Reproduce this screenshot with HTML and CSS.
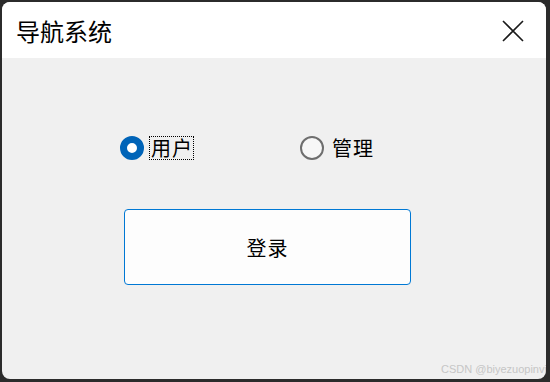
FILE: index.html
```html
<!DOCTYPE html>
<html lang="zh-CN">
<head>
    <meta charset="UTF-8">
    <meta name="viewport" content="width=device-width, initial-scale=1.0">
    <title>导航系统</title>
    <link rel="stylesheet" href="styles.css">
</head>
<body>
    <div class="window">
        <!-- Title Bar -->
        <div class="titlebar">
            <span class="title">导航系统</span>
            <button class="close" aria-label="关闭">
                <svg width="22" height="22" viewBox="0 0 22 22">
                    <path d="M1 1 L21 21 M21 1 L1 21" stroke="#1a1a1a" stroke-width="1.6" fill="none"/>
                </svg>
            </button>
        </div>

        <!-- Login Form -->
        <div class="content">
            <div class="roles">
                <label class="role">
                    <span class="radio checked"></span>
                    <span class="role-text focused">用户</span>
                </label>
                <label class="role">
                    <span class="radio"></span>
                    <span class="role-text">管理</span>
                </label>
            </div>
            <button class="login">登录</button>
            <div class="watermark">CSDN @biyezuopinvip</div>
        </div>
    </div>
</body>
</html>
```

FILE: styles.css
```css
/* General Body Styling */
body {
    margin: 0;
    width: 550px;
    height: 382px;
    background-color: #2b2b2b;
    font-family: "Noto Sans CJK SC", sans-serif;
    overflow: hidden;
}

/* Window Frame */
.window {
    position: relative;
    margin: 2px 0 0 2px;
    width: 544px;
    height: 377px;
    border-radius: 8px;
    overflow: hidden;
    background-color: #f0f0f0;
    display: flex;
    flex-direction: column;
}

/* Title Bar */
.titlebar {
    height: 56px;
    background-color: #ffffff;
    display: flex;
    align-items: center;
    justify-content: space-between;
    padding: 0 22px 0 14px;
}

.title {
    font-size: 24px;
    color: #000000;
    margin-top: 1px;
}

.close {
    background: none;
    border: none;
    padding: 0;
    width: 22px;
    height: 22px;
    display: flex;
    margin-top: 1px;
}

/* Content */
.content {
    flex: 1;
    padding: 78px 0 0 118px;
}

.roles {
    display: flex;
    height: 24px;
    align-items: center;
}

.role {
    display: flex;
    align-items: center;
    width: 180px;
    font-family: "Noto Sans CJK SC", sans-serif;
    font-size: 20px;
    color: #000000;
}

.radio {
    box-sizing: border-box;
    width: 24px;
    height: 24px;
    border-radius: 50%;
    border: 2px solid #6e6e6e;
    background-color: #f7f7f7;
    margin-right: 6px;
    flex-shrink: 0;
}

.radio.checked {
    border: 7px solid #0064b8;
    background-color: #ffffff;
}

.role-text {
    line-height: 22px;
    padding: 0 0 0 1px;
    border: 1px dotted transparent;
    letter-spacing: 1px;
}

.role-text.focused {
    border-color: #000000;
    margin-left: -1px;
}

/* Login Button */
.login {
    margin: 49px 0 0 4px;
    width: 287px;
    height: 76px;
    background-color: #fdfdfd;
    border: 1px solid #0078d4;
    border-radius: 4px;
    font-family: "Noto Sans CJK SC", sans-serif;
    font-size: 20px;
    color: #000000;
    letter-spacing: 1px;
    display: block;
}

/* Watermark */
.watermark {
    position: absolute;
    left: 439px;
    bottom: 4px;
    font-family: "Liberation Sans", Arial, sans-serif;
    font-size: 11px;
    color: #c6c6c6;
    white-space: nowrap;
}
```
